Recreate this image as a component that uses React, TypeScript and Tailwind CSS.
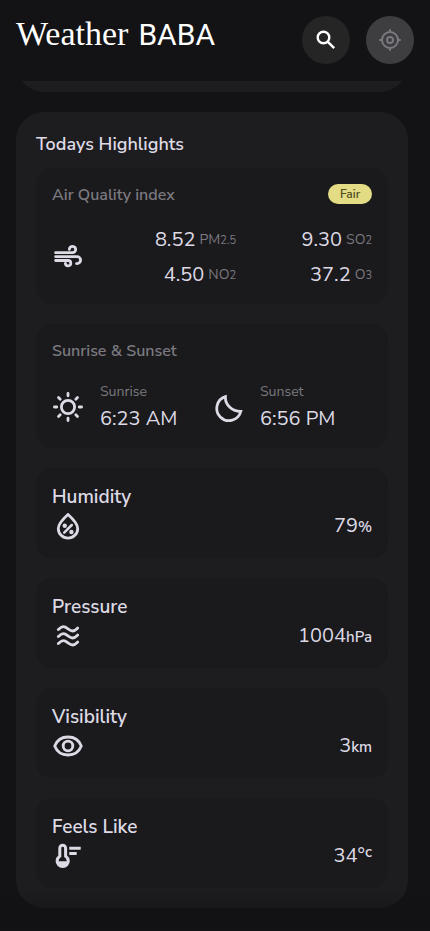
import type { ReactNode } from "react";

function Icon({ children }: { children: ReactNode }) {
  return (
    <svg
      viewBox="0 0 32 32"
      fill="none"
      stroke="currentColor"
      strokeWidth="2.8"
      strokeLinecap="round"
      strokeLinejoin="round"
      aria-hidden="true"
      className="size-8 shrink-0"
    >
      {children}
    </svg>
  );
}

const AirIcon = () => (
  <Icon>
    <path d="M3.6 12.7H20.5a3.2 3.2 0 1 0-3.2-3.4" />
    <path d="M3.6 16.6h21.5a3.5 3.5 0 0 1 0 7h-.6" />
    <path d="M3.6 20.5h12.5a2.7 2.7 0 1 1-2.7 2.9" />
  </Icon>
);

const SunIcon = () => (
  <Icon>
    <circle cx="16" cy="16" r="6.6" />
    <path d="M16 2.4v2.4M16 27.2v2.4M2.4 16h2.4M27.2 16h2.4M6.5 6.5l1.7 1.7M23.8 23.8l1.7 1.7M6.5 25.5l1.7-1.7M23.8 8.2l1.7-1.7" />
  </Icon>
);

const MoonIcon = () => (
  <Icon>
    <path strokeLinejoin="miter" d="M13.4 5.7A12.2 12.2 0 1 0 28.8 20.5C20.5 20.6 13 14.2 13.4 5.7Z" />
  </Icon>
);

const HumidityIcon = () => (
  <Icon>
    <path d="M16 4.4C11.6 8.4 6.3 13.2 6.3 18.4a9.7 9.7 0 0 0 19.4 0C25.7 13.2 20.4 8.4 16 4.4Z" />
    <path strokeWidth="2.5" d="M19.8 15l-7.6 7.6" />
    <circle cx="12.7" cy="15.7" r="2.2" fill="currentColor" stroke="none" />
    <circle cx="19.4" cy="22" r="2.2" fill="currentColor" stroke="none" />
  </Icon>
);

const PressureIcon = () => (
  <Icon>
    {[0, 7, 14].map((y) => (
      <path
        key={y}
        transform={`translate(0 ${y})`}
        d="M6.3 9.6C8 8 9.3 6.6 11.3 6.6 15 6.6 17 11 20.7 11c2.2 0 3.5-1.4 5-2.9"
      />
    ))}
  </Icon>
);

const VisibilityIcon = () => (
  <Icon>
    <path d="M2.7 16C5 10.2 10.1 7 16 7S27 10.2 29.3 16C27 21.8 21.9 25 16 25S5 21.8 2.7 16Z" />
    <circle cx="16" cy="16" r="4.8" />
  </Icon>
);

const ThermometerIcon = () => (
  <Icon>
    <path
      fill="currentColor"
      stroke="none"
      fillRule="evenodd"
      d="M6.3 8.2a4.400 4.400 0 0 1 8.800 0V15.400a7.100 7.100 0 1 1-8.800 0ZM9.300 8.200a1.400 1.400 0 0 1 2.800 0V17c1.600.7 2.600 2.300 2.600 4.300H6.700c0-2 1-3.600 2.600-4.300Z"
    />
    <path strokeLinecap="butt" strokeWidth="3" d="M17.3 8.2H28.7M17.3 13.5H24.7" />
  </Icon>
);

const SearchIcon = () => (
  <svg viewBox="0 0 24 24" fill="none" stroke="currentColor" strokeWidth="2.4" aria-hidden="true" className="size-6">
    <circle cx="9.5" cy="9.5" r="5.8" />
    <path d="M13.6 13.6l6.600 6.600" />
  </svg>
);

const LocationIcon = () => (
  <svg viewBox="0 0 24 24" fill="none" stroke="currentColor" strokeWidth="2" aria-hidden="true" className="size-6">
    <circle cx="12" cy="12" r="8" />
    <circle cx="12" cy="12" r="3" />
    <path strokeLinecap="round" d="M12 2v2M12 20v2M2 12h2M20 12h2" />
  </svg>
);

const pollutants = [
  { value: "8.52", name: "PM", sub: "2.5" },
  { value: "9.30", name: "SO", sub: "2" },
  { value: "4.50", name: "NO", sub: "2" },
  { value: "37.2", name: "O", sub: "3" },
];

const unitClass = "text-[15px] leading-none font-semibold";

const metrics = [
  { title: "Humidity", icon: <HumidityIcon />, value: "79", unit: <span className={unitClass}>%</span> },
  { title: "Pressure", icon: <PressureIcon />, value: "1004", unit: <span className={unitClass}>hPa</span> },
  { title: "Visibility", icon: <VisibilityIcon />, value: "3", unit: <span className={unitClass}>km</span> },
  {
    title: "Feels Like",
    icon: <ThermometerIcon />,
    value: "34°",
    unit: <span className="align-[5px] text-[15px] leading-none font-semibold">c</span>,
  },
];

function SunTime({ icon, label, time }: { icon: ReactNode; label: string; time: string }) {
  return (
    <div className="flex w-40 items-center gap-4">
      {icon}
      <div>
        <p className="text-sm leading-[22px] text-[#7b7980]">{label}</p>
        <p className="mt-0.5 text-xl leading-7">{time}</p>
      </div>
    </div>
  );
}

export default function App() {
  return (
    <div className="min-h-screen bg-[#131214] font-['Nunito_Sans','Nunito','Lato',sans-serif] text-[#dddae5]">
      <header className="flex h-20 items-center justify-between px-4">
        <a href="#home" className="mb-3 flex items-baseline gap-2.5 whitespace-nowrap text-white">
          <span className="font-['Liberation_Serif',serif] text-[34px] leading-10">Weather</span>
          <span className="font-['Roboto',sans-serif] text-[30px] leading-10">BABA</span>
        </a>
        <div className="flex gap-4">
          <button aria-label="Search" className="grid size-12 place-items-center rounded-full bg-[#252526] text-white">
            <SearchIcon />
          </button>
          <button
            aria-label="Current location"
            disabled
            className="grid size-12 place-items-center rounded-full bg-[#3e3d40] text-[#7b7980]"
          >
            <LocationIcon />
          </button>
        </div>
      </header>

      <main className="mt-px pr-[22px] pl-4">
        <div className="flex h-[11px] items-end overflow-hidden">
          <div className="h-20 w-full shrink-0 rounded-[28px] bg-[#1d1c1f]" />
        </div>

        <section className="mt-5 rounded-[28px] bg-[#1d1c1f] p-5">
          <h2 className="mb-3 text-lg leading-6 font-semibold">Todays Highlights</h2>

          <div className="flex flex-col gap-5">
            <div className="rounded-2xl bg-[#1a191c] px-4 pt-4 pb-3.5">
              <div className="flex items-start justify-between">
                <h3 className="text-base leading-[22px] font-semibold text-[#7b7980]">Air Quality index</h3>
                <span className="w-11 rounded-full bg-[#e4dc84] text-center text-xs leading-5 font-semibold text-[#504d1f]">
                  Fair
                </span>
              </div>
              <div className="mt-[19px] flex items-start gap-4">
                <div className="pt-[15px]">
                  <AirIcon />
                </div>
                <ul className="grid grow grid-cols-2 gap-y-[5px]">
                  {pollutants.map((p) => (
                    <li key={p.name} className="flex items-center justify-end gap-1">
                      <span className="text-xl leading-[30px]">{p.value}</span>
                      <span className="text-sm text-[#7b7980]">
                        {p.name}
                        <span className="text-[11px]">{p.sub}</span>
                      </span>
                    </li>
                  ))}
                </ul>
              </div>
            </div>

            <div className="rounded-2xl bg-[#1a191c] px-4 pt-4 pb-[15px]">
              <h3 className="text-base leading-[22px] font-semibold text-[#7b7980]">Sunrise &amp; Sunset</h3>
              <div className="mt-[19px] flex">
                <SunTime icon={<SunIcon />} label="Sunrise" time="6:23 AM" />
                <SunTime icon={<MoonIcon />} label="Sunset" time="6:56 PM" />
              </div>
            </div>

            {metrics.map((m) => (
              <div key={m.title} className="rounded-2xl bg-[#1a191c] p-4">
                <h3 className="text-[19px] leading-[26px] font-semibold">{m.title}</h3>
                <div className="flex items-center justify-between">
                  {m.icon}
                  <p className="text-xl leading-8">
                    {m.value}
                    {m.unit}
                  </p>
                </div>
              </div>
            ))}
          </div>
        </section>
      </main>
      <div className="pointer-events-none fixed inset-x-0 bottom-0 h-10 bg-linear-to-b from-transparent to-[#131214]" />
    </div>
  );
}
